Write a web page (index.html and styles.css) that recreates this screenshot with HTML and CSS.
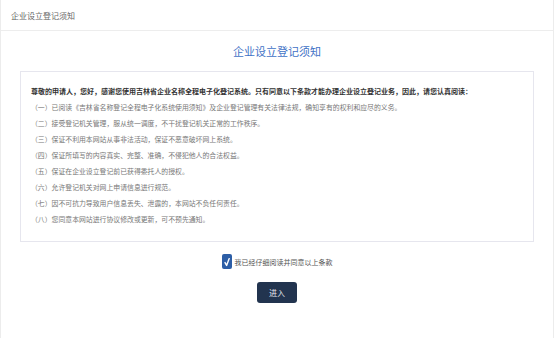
FILE: index.html
```html
<!DOCTYPE html>
<html lang="zh-CN">
<head>
    <meta charset="UTF-8">
    <meta name="viewport" content="width=device-width, initial-scale=1.0">
    <title>企业设立登记须知</title>
    <link rel="stylesheet" href="styles.css">
</head>
<body>
    <div class="page">
        <!-- 顶部标题栏 -->
        <div class="page-header">企业设立登记须知</div>

        <div class="page-body">
            <h1 class="notice-title">企业设立登记须知</h1>

            <!-- 须知条款 -->
            <div class="notice-box">
                <p class="notice-lead">尊敬的申请人，您好，感谢您使用吉林省企业名称全程电子化登记系统。只有同意以下条款才能办理企业设立登记业务，因此，请您认真阅读：</p>
                <p>（一）已阅读《吉林省名称登记全程电子化系统使用须知》及企业登记管理有关法律法规，确知享有的权利和应尽的义务。</p>
                <p>（二）接受登记机关管理，服从统一调度，不干扰登记机关正常的工作秩序。</p>
                <p>（三）保证不利用本网站从事非法活动，保证不恶意破坏网上系统。</p>
                <p>（四）保证所填写的内容真实、完整、准确，不侵犯他人的合法权益。</p>
                <p>（五）保证在企业设立登记前已获得委托人的授权。</p>
                <p>（六）允许登记机关对网上申请信息进行规范。</p>
                <p>（七）因不可抗力导致用户信息丢失、泄露的，本网站不负任何责任。</p>
                <p>（八）您同意本网站进行协议修改或更新，可不预先通知。</p>
            </div>

            <label class="agree">
                <span class="agree-box">
                    <svg viewBox="0 0 10 14" width="10" height="14">
                        <path d="M3 7.6 L4.6 10.4 L7.2 3.6" fill="none" stroke="#fff" stroke-width="1.4" stroke-linecap="round" stroke-linejoin="round"/>
                    </svg>
                </span>
                <span class="agree-text">我已经仔细阅读并同意以上条款</span>
            </label>

            <button class="enter-btn" type="button">进入</button>
        </div>
    </div>
</body>
</html>
```

FILE: styles.css
```css
/* Reset de base */
* {
    margin: 0;
    padding: 0;
    box-sizing: border-box;
}

body {
    font-family: "Noto Sans CJK SC", "Noto Sans", sans-serif;
    background-color: #fff;
    color: #555;
}

/* Cadre principal */
.page {
    height: 338px;
    border-left: 1px solid #ececec;
    border-right: 1px solid #ececec;
    display: flex;
    flex-direction: column;
}

.page-header {
    height: 31px;
    padding-left: 10px;
    border-bottom: 1px solid #ededed;
    display: flex;
    align-items: center;
    font-size: 8px;
    color: #666;
}

.page-body {
    padding: 0 19px;
    display: flex;
    flex-direction: column;
    align-items: center;
}

.notice-title {
    margin-top: 12px;
    font-size: 11px;
    line-height: 16px;
    font-weight: 400;
    color: #3f72c6;
}

/* Bloc des conditions */
.notice-box {
    width: 100%;
    margin-top: 12px;
    padding: 11px 10px 14px;
    border: 1px solid #e6e6ee;
}

.notice-box p {
    font-size: 6.87px;
    line-height: 16px;
    color: #777;
    white-space: nowrap;
}

.notice-box .notice-lead {
    font-size: 7px;
    font-weight: 700;
    color: #333;
}

/* Case à cocher */
.agree {
    margin-top: 12px;
    display: flex;
    align-items: center;
    gap: 3px;
    cursor: pointer;
}

.agree-box {
    width: 10px;
    height: 15px;
    border-radius: 2px;
    background-color: #2d5ea6;
    display: flex;
    align-items: center;
    justify-content: center;
}

.agree-text {
    font-size: 7px;
    color: #555;
}

.enter-btn {
    margin-top: 13px;
    width: 40px;
    height: 21px;
    border: none;
    border-radius: 3px;
    background-color: #22344f;
    color: #e6e9ee;
    font-family: inherit;
    font-size: 8px;
    cursor: pointer;
}
```
